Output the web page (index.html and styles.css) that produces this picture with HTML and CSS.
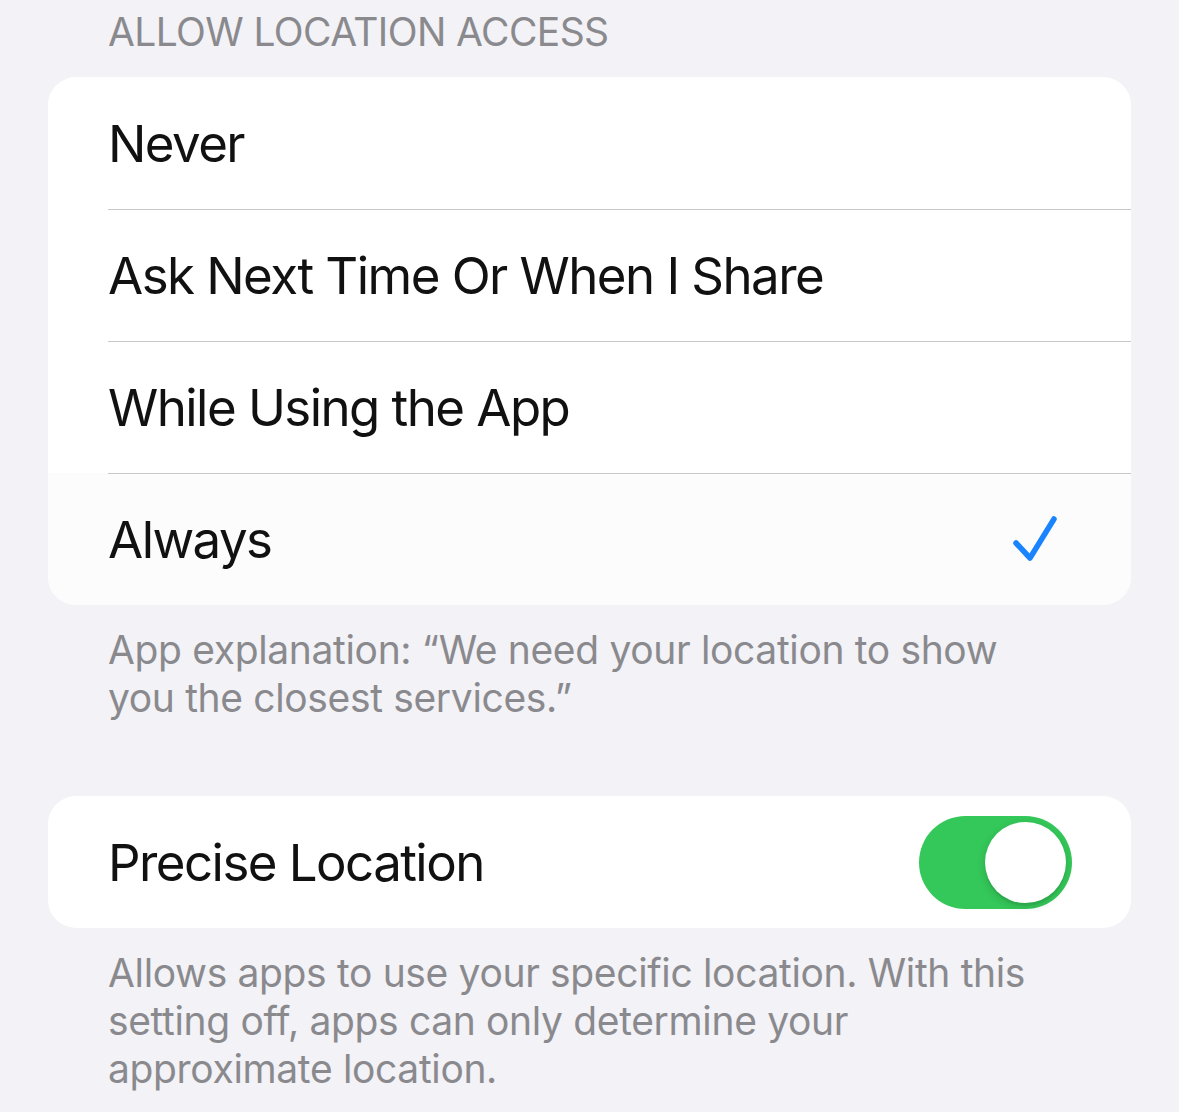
FILE: index.html
```html
<!DOCTYPE html>
<html lang="en">
  <head>
    <meta charset="UTF-8" />
    <meta name="viewport" content="width=device-width, initial-scale=1.0" />
    <title>Location</title>
    <link rel="stylesheet" href="styles.css">
  </head>
  <body>
    <!-- location access choices -->
    <div class="group">
      <div class="group-header">ALLOW LOCATION ACCESS</div>
      <div class="card">
        <div class="row"><span class="label">Never</span></div>
        <div class="row"><span class="label">Ask Next Time Or When I Share</span></div>
        <div class="row"><span class="label">While Using the App</span></div>
        <div class="row selected">
          <span class="label">Always</span>
          <svg class="check" width="48" height="48" viewBox="0 0 48 48">
            <path d="M5 28 L19 43 L43 4" fill="none" stroke="#1a84ff" stroke-width="5.5" stroke-linecap="round" stroke-linejoin="round" />
          </svg>
        </div>
      </div>
      <div class="group-footer">App explanation: “We need your location to show you the closest services.”</div>
    </div>

    <!-- precise location switch -->
    <div class="group">
      <div class="card">
        <div class="row">
          <span class="label">Precise Location</span>
          <div class="switch on"><div class="knob"></div></div>
        </div>
      </div>
      <div class="group-footer">Allows apps to use your specific location. With this setting off, apps can only determine your approximate location.</div>
    </div>
  </body>
</html>
```

FILE: styles.css
```css
:root {
  --bg: #f2f2f7;
  --card: #ffffff;
  --text: #111112;
  --muted: #8a8a8e;
  --sep: #c8c8cc;
  --green: #34c759;
}

* {
  box-sizing: border-box;
  margin: 0;
  padding: 0;
}
body {
  font-family: Inter, "Noto Sans", sans-serif;
  background-color: var(--bg);
  color: var(--text);
  padding: 0 48px;
  width: 1179px;
}
.group {
  margin-bottom: 74px;
}
.group-header {
  font-size: 39px;
  line-height: 48px;
  color: var(--muted);
  padding: 8px 60px 21px;
  letter-spacing: -0.6px;
}
.card {
  background-color: var(--card);
  border-radius: 28px;
  overflow: hidden;
}
.row {
  height: 132px;
  display: flex;
  align-items: center;
  justify-content: space-between;
  padding: 0 60px;
  position: relative;
}
/* hairline that starts at the text inset */
.row + .row::before {
  content: "";
  position: absolute;
  top: 0;
  left: 60px;
  right: 0;
  height: 1px;
  background-color: var(--sep);
}
.row.selected {
  background-color: #fcfcfd;
}
.label {
  font-size: 51px;
  letter-spacing: -1.55px;
}
.check {
  margin-right: 12px;
}
.group-footer {
  font-size: 39px;
  line-height: 48px;
  color: var(--muted);
  padding: 21px 60px 0;
  letter-spacing: -0.35px;
}
/* toggle */
.switch {
  width: 153px;
  height: 93px;
  border-radius: 47px;
  background-color: var(--green);
  display: flex;
  align-items: center;
  justify-content: flex-end;
  padding: 0 6px;
  margin-right: -1px;
}
.knob {
  width: 81px;
  height: 81px;
  border-radius: 50%;
  background-color: #fff;
  box-shadow: 0 3px 8px rgba(0, 0, 0, 0.15), 0 3px 1px rgba(0, 0, 0, 0.06);
}
```
